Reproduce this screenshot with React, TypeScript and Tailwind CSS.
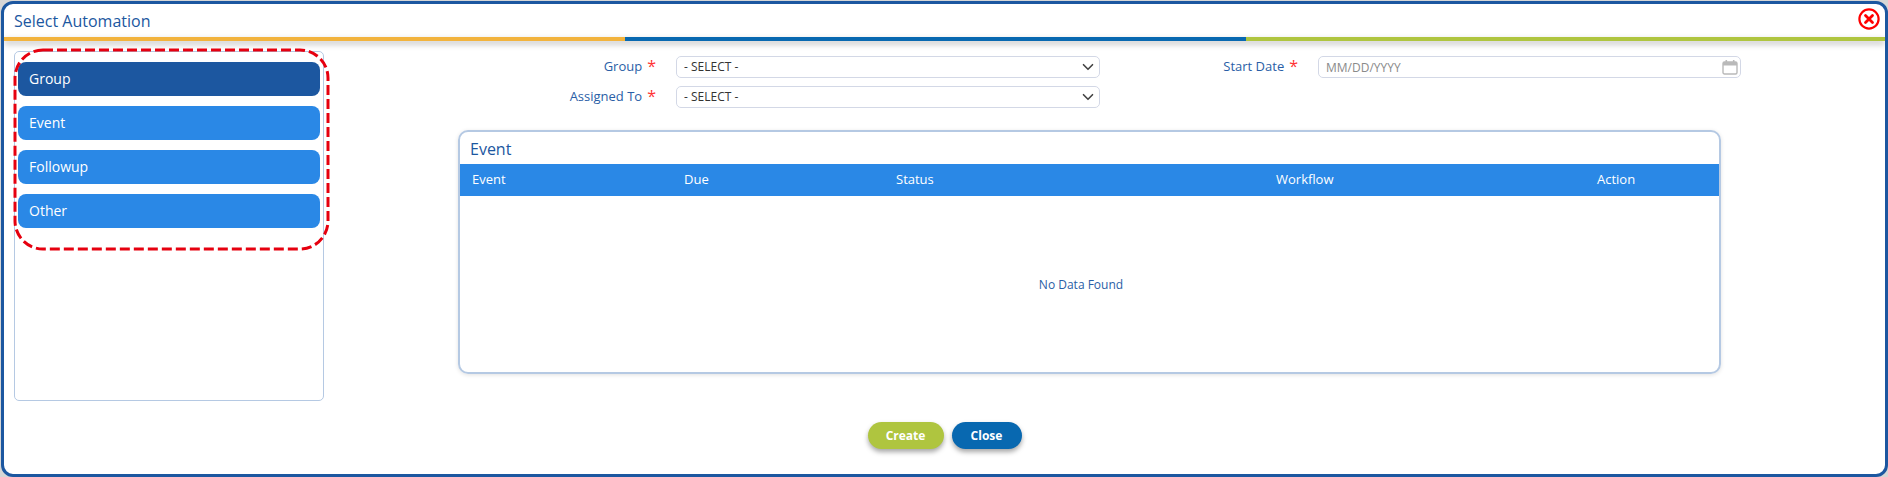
import { ChevronDown } from 'lucide-react';

const MENU = ['Group', 'Event', 'Followup', 'Other'];

const COLUMNS = [
  { label: 'Event', width: 'w-[212px]' },
  { label: 'Due', width: 'w-[212px]' },
  { label: 'Status', width: 'w-[380px]' },
  { label: 'Workflow', width: 'w-[321px]' },
  { label: 'Action', width: 'flex-1' },
];

function Label({ text }: { text: string }) {
  return (
    <label className="flex justify-end items-start gap-[5px] pr-[20px] text-[13px] leading-[20px] text-[#2a5ea6]">
      {text}
      <span className="mt-[2px] text-[#f33] text-[16px] leading-[16px]">*</span>
    </label>
  );
}

function SelectBox() {
  return (
    <div className="relative h-[22px]">
      <select className="block w-full h-full appearance-none rounded-[5px] border border-[#d3d8e6] bg-white pl-[7px] text-[12px] text-[#333] outline-none">
        <option>- SELECT -</option>
      </select>
      <ChevronDown className="absolute right-[3px] top-[2px] w-[18px] h-[18px] text-[#444]" strokeWidth={2.2} />
    </div>
  );
}

function CalendarIcon() {
  return (
    <svg className="absolute right-[3px] top-[3px]" width="16" height="16" viewBox="0 0 16 16" fill="none">
      <rect x="1" y="3" width="14" height="12" rx="1.5" stroke="#b9b9b9" strokeWidth="1.4" />
      <rect x="1" y="3" width="14" height="3.5" fill="#b9b9b9" />
      <rect x="3.5" y="1" width="1.6" height="3" fill="#b9b9b9" />
      <rect x="10.9" y="1" width="1.6" height="3" fill="#b9b9b9" />
    </svg>
  );
}

export default function App() {
  return (
    <div className="h-[477px] w-full bg-[#d6d6d6] pl-[1px] pt-[1px] font-['Open_Sans',sans-serif]">
      <div className="h-full flex flex-col rounded-[12px] border-[3px] border-[#1c57a0] bg-white overflow-hidden">
        <div className="h-[33px] shrink-0 relative flex items-center pl-[10px]">
          <h1 className="text-[16px] text-[#1c57a0]">Select Automation</h1>
          <button className="absolute right-[5px] top-[4px]" aria-label="Close">
            <svg width="22" height="22" viewBox="0 0 22 22" fill="none">
              <circle cx="11" cy="11" r="9.6" stroke="#f00" strokeWidth="2.2" />
              <path d="M7.5 7.5l7 7M14.5 7.5l-7 7" stroke="#f00" strokeWidth="2.8" strokeLinecap="round" />
            </svg>
          </button>
        </div>

        <div className="h-[4px] shrink-0 flex shadow-[0_3px_6px_rgba(0,0,0,0.28)] relative">
          <div className="w-[621px] bg-[#f2b33d]" />
          <div className="w-[621px] bg-[#0868b0]" />
          <div className="flex-1 bg-[#afc53f]" />
        </div>

        <div className="flex pl-[10px] pt-[10px]">
          <div className="relative w-[310px] h-[350px] shrink-0 rounded-[5px] border border-[#b5c9e3] px-[3px] pt-[10px] flex flex-col gap-[10px]">
            {MENU.map((item, i) => (
              <button
                key={item}
                className={`h-[34px] shrink-0 rounded-[8px] pl-[11px] pb-[2px] text-left text-[14px] text-white ${i === 0 ? 'bg-[#1c57a0]' : 'bg-[#2a88e6]'}`}
              >
                {item}
              </button>
            ))}
            <svg className="absolute left-[-2px] top-[-4px] pointer-events-none" width="318" height="204" fill="none">
              <rect x="2" y="2" width="313" height="199" rx="28" stroke="#e6000f" strokeWidth="3" strokeDasharray="10 4" />
            </svg>
          </div>

          <div className="flex-1 pt-[5px]">
            <div className="grid grid-cols-[352px_424px_218px_423px] gap-y-[8px]">
              <Label text="Group" />
              <SelectBox />
              <Label text="Start Date" />
              <div className="relative h-[22px]">
                <input
                  placeholder="MM/DD/YYYY"
                  className="block w-full h-full rounded-[5px] border border-[#d3d8e6] bg-white pl-[7px] text-[12px] outline-none placeholder:text-[#8a8a8a]"
                />
                <CalendarIcon />
              </div>
              <Label text="Assigned To" />
              <SelectBox />
            </div>

            <div className="ml-[134px] mt-[22px] w-[1263px] h-[244px] rounded-[10px] border-2 border-[#b5c9e3] shadow-[0_1px_4px_rgba(0,0,0,0.12)] overflow-hidden">
              <h2 className="h-[32px] pl-[10px] pt-[6px] text-[16px] leading-[22px] text-[#1c57a0]">Event</h2>
              <div className="flex h-[32px] items-center pl-[12px] bg-[#2a88e6] text-[13px] text-white">
                {COLUMNS.map(col => (
                  <div key={col.label} className={col.width}>{col.label}</div>
                ))}
              </div>
              <div className="h-[176px] flex items-center justify-center pt-[2px] pr-[17px] text-[12px] text-[#2a5ea6]">
                No Data Found
              </div>
            </div>
          </div>
        </div>

        <div className="mt-[21px] flex justify-center gap-[8px]">
          <button className="w-[76px] h-[27px] rounded-full bg-[#afc53f] text-[12px] font-bold text-white shadow-[0_3px_5px_rgba(0,0,0,0.35)]">Create</button>
          <button className="w-[70px] h-[27px] rounded-full bg-[#0868b0] text-[12px] font-bold text-white shadow-[0_3px_5px_rgba(0,0,0,0.35)]">Close</button>
        </div>
      </div>
    </div>
  );
}
